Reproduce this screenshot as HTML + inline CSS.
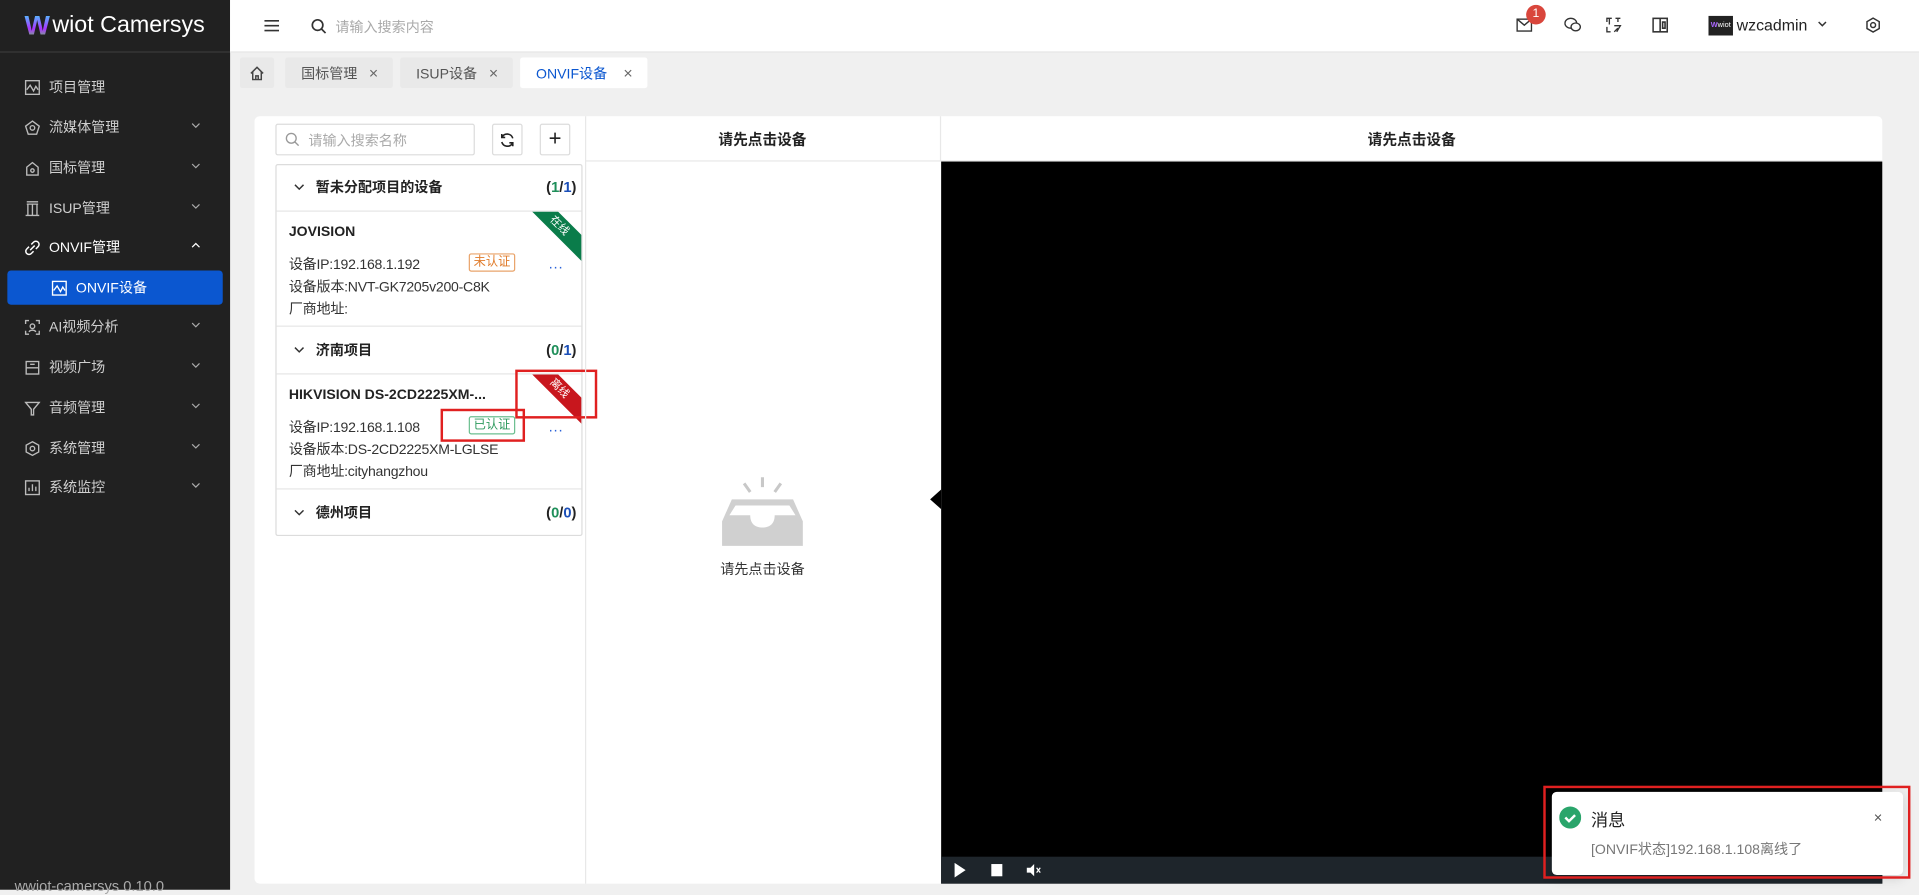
<!DOCTYPE html>
<html><head><meta charset="utf-8"><style>
*{box-sizing:border-box;margin:0;padding:0}
html,body{width:1919px;height:889px;overflow:hidden;background:#f0f0f0}
body{font-family:"Liberation Sans","Noto Sans CJK SC",sans-serif;font-size:12px;color:#333}
#w{position:absolute;left:0;top:0;width:1568px;height:727px;transform:scale(1.22385);transform-origin:0 0;background:#f0f0f0}
.abs{position:absolute}
#side{left:0;top:0;width:188px;height:727px;background:#212121;color:#cfcfcf}
#logo{height:43px;border-bottom:1px solid #3a3a3a;display:flex;align-items:center;padding-left:20px;font-size:19px;color:#fff}
#logo b{font-size:22px;background:linear-gradient(180deg,#3ef 0%,#a3f 60%,#5f3 100%);-webkit-background-clip:text;color:transparent;margin-right:2px}
.mi{position:absolute;left:0;width:188px;height:30px;display:flex;align-items:center;padding-left:20px;font-size:11.5px}
.mi svg{width:13px;height:13px;margin-right:7px}
.mi .ch{position:absolute;right:16px;top:9px;width:10px;height:10px}
.act{left:6px;width:176px;background:#0b57d0;border-radius:3px;color:#fff;padding-left:36px}
#hdr{left:188px;top:0;width:1380px;height:43px;background:#fff;border-bottom:1px solid #e4e4e4}
.tab{position:absolute;top:47px;height:25px;background:#e9e9e9;display:flex;align-items:center;padding-left:13px;color:#555;font-size:11.5px;border-radius:2px}
.tab i{font-style:normal;position:absolute;right:12px;font-size:13px;color:#666}
#card{left:208px;top:95px;width:1330px;height:627px;background:#fff;border-radius:4px}
.box{position:absolute;border:1px solid #dcdcdc;border-radius:2px;background:#fff}
.grp{position:absolute;left:226px;width:249px;height:38px;border-top:1px solid #e6e6e6;display:flex;align-items:center;font-weight:bold;font-size:11.5px;color:#222}
.grp .c{position:absolute;right:4px;font-size:12px}
.dev{position:absolute;left:226px;width:249px;height:94px;border-top:1px solid #e6e6e6;overflow:hidden}
.dev .t{position:absolute;left:10px;top:11px;font-weight:bold;font-size:11.5px;color:#222}
.dev .r{position:absolute;left:10px;font-size:11.5px;color:#333;letter-spacing:-.2px}
.tag{position:absolute;left:157px;top:34px;width:38px;height:15px;border:1px solid;border-radius:2px;font-size:10px;text-align:center;line-height:13px}
.dots{position:absolute;left:222px;top:38px;color:#2a62d8;font-size:12px;letter-spacing:0px}
.rib{position:absolute;right:-27px;top:4px;width:90px;height:15px;transform:rotate(45deg);color:#fff;font-size:9px;text-align:center;line-height:15px}
.red{position:absolute;border:2px solid #e02020}
</style></head><body><div id="w">
<div id="side" class="abs">
 <div id="logo"><b>W</b>wiot Camersys</div>
 <div class="mi" style="top:56px"><svg viewBox="0 0 14 14" fill="none" stroke="#bbb" stroke-width="1.2"><rect x="1" y="1" width="12" height="12"/><path d="M2 9l3-4 3 5 2-4 2 3"/></svg>项目管理</div>
 <div class="mi" style="top:89px"><svg viewBox="0 0 14 14" fill="none" stroke="#bbb" stroke-width="1.2"><path d="M7 1l6 4.5-2.3 7H3.3L1 5.5z"/><circle cx="7" cy="7" r="2"/></svg>流媒体管理<svg class="ch" viewBox="0 0 10 10"><path d="M2 3l3 3 3-3" fill="none" stroke="#aaa"/></svg></div>
 <div class="mi" style="top:122px"><svg viewBox="0 0 14 14" fill="none" stroke="#bbb" stroke-width="1.2"><path d="M2 13V6l5-4 5 4v7z"/><circle cx="7" cy="9" r="1.5"/></svg>国标管理<svg class="ch" viewBox="0 0 10 10"><path d="M2 3l3 3 3-3" fill="none" stroke="#aaa"/></svg></div>
 <div class="mi" style="top:155px"><svg viewBox="0 0 14 14" fill="none" stroke="#bbb" stroke-width="1.2"><path d="M1 13h12M2 3h10M3 3v10M7 3v10M11 3v10M2 1h10"/></svg>ISUP管理<svg class="ch" viewBox="0 0 10 10"><path d="M2 3l3 3 3-3" fill="none" stroke="#aaa"/></svg></div>
 <div class="mi" style="top:187px;color:#fff"><svg viewBox="0 0 14 14" fill="none" stroke="#fff" stroke-width="1.3"><path d="M5 9l4-4M4 6L2 8a2.5 2.5 0 004 4l2-2M10 8l2-2a2.5 2.5 0 00-4-4L6 4"/></svg>ONVIF管理<svg class="ch" viewBox="0 0 10 10"><path d="M2 6l3-3 3 3" fill="none" stroke="#fff"/></svg></div>
 <div class="mi act" style="top:221px;height:28px"><svg viewBox="0 0 14 14" fill="none" stroke="#fff" stroke-width="1.2"><rect x="1" y="1" width="12" height="12"/><path d="M2 9l3-4 3 5 2-4 2 3"/></svg>ONVIF设备</div>
 <div class="mi" style="top:252px"><svg viewBox="0 0 14 14" fill="none" stroke="#bbb" stroke-width="1.2"><path d="M1 4V1h3M10 1h3v3M13 10v3h-3M4 13H1v-3"/><circle cx="7" cy="6" r="2"/><path d="M4 11c1-2 5-2 6 0"/></svg>AI视频分析<svg class="ch" viewBox="0 0 10 10"><path d="M2 3l3 3 3-3" fill="none" stroke="#aaa"/></svg></div>
 <div class="mi" style="top:285px"><svg viewBox="0 0 14 14" fill="none" stroke="#bbb" stroke-width="1.2"><rect x="1.5" y="1.5" width="11" height="11"/><path d="M1.5 7h11M5 4h4"/></svg>视频广场<svg class="ch" viewBox="0 0 10 10"><path d="M2 3l3 3 3-3" fill="none" stroke="#aaa"/></svg></div>
 <div class="mi" style="top:318px"><svg viewBox="0 0 14 14" fill="none" stroke="#bbb" stroke-width="1.2"><path d="M1 2h12L8 8v5H6V8z"/></svg>音频管理<svg class="ch" viewBox="0 0 10 10"><path d="M2 3l3 3 3-3" fill="none" stroke="#aaa"/></svg></div>
 <div class="mi" style="top:351px"><svg viewBox="0 0 14 14" fill="none" stroke="#bbb" stroke-width="1.2"><path d="M7 1l5.5 3v6L7 13l-5.5-3V4z"/><circle cx="7" cy="7" r="2"/></svg>系统管理<svg class="ch" viewBox="0 0 10 10"><path d="M2 3l3 3 3-3" fill="none" stroke="#aaa"/></svg></div>
 <div class="mi" style="top:383px"><svg viewBox="0 0 14 14" fill="none" stroke="#bbb" stroke-width="1.2"><rect x="1" y="1" width="12" height="12"/><path d="M4 10V7M7 10V4M10 10V6"/></svg>系统监控<svg class="ch" viewBox="0 0 10 10"><path d="M2 3l3 3 3-3" fill="none" stroke="#aaa"/></svg></div>
 <div class="abs" style="left:12px;top:717px;color:#aaa;font-size:12px">wwiot-camersys 0.10.0</div>
</div>
<div id="hdr" class="abs">
 <svg class="abs" style="left:28px;top:15px" width="12" height="12" viewBox="0 0 12 12"><path d="M0 2h12M0 6h12M0 10h12" stroke="#333" stroke-width="1.3"/></svg>
 <svg class="abs" style="left:66px;top:15px" width="13" height="13" viewBox="0 0 13 13" fill="none" stroke="#333" stroke-width="1.4"><circle cx="5.5" cy="5.5" r="4.3"/><path d="M8.7 8.7l3.3 3.3"/></svg>
 <div class="abs" style="left:86px;top:14px;color:#aaa;font-size:11.5px">请输入搜索内容</div>
 <svg class="abs" style="left:1051px;top:15px" width="13" height="11" viewBox="0 0 13 11" fill="none" stroke="#333" stroke-width="1.2"><rect x=".6" y=".6" width="11.8" height="9.8"/><path d="M.6 .6l5.9 5 5.9-5"/></svg>
 <div class="abs" style="left:1059px;top:4px;width:16px;height:16px;border-radius:8px;background:#d9463c;color:#fff;font-size:10px;text-align:center;line-height:16px">1</div>
 <svg class="abs" style="left:1090px;top:14px" width="14" height="13" viewBox="0 0 14 13" fill="none" stroke="#333" stroke-width="1.1"><ellipse cx="5.5" cy="5" rx="4.8" ry="4"/><ellipse cx="9.5" cy="8" rx="3.8" ry="3.2" fill="#fff"/></svg>
 <svg class="abs" style="left:1124px;top:14px" width="13" height="13" viewBox="0 0 13 13" fill="none" stroke="#333" stroke-width="1.1"><path d="M1 4V1h4M3 1v5M1 8v4h3M8 1h4M10 1v3M7 7h5l-3 5M7 12l3-3"/></svg>
 <svg class="abs" style="left:1162px;top:14px" width="13" height="13" viewBox="0 0 13 13" fill="none" stroke="#333" stroke-width="1.3"><rect x=".7" y="1" width="11.6" height="11"/><path d="M6.5 1v11M8.5 4h2v5h-2z"/></svg>
 <div class="abs" style="left:1208px;top:13px;width:20px;height:16px;background:#222;color:#fff;font-size:6px;line-height:16px;text-align:center"><b style="color:#a6f">W</b>wiot</div>
 <div class="abs" style="left:1231px;top:13px;font-size:13px;color:#222">wzcadmin</div>
 <svg class="abs" style="left:1296px;top:16px" width="10" height="8" viewBox="0 0 10 8"><path d="M2 2l3 3 3-3" fill="none" stroke="#333" stroke-width="1.2"/></svg>
 <svg class="abs" style="left:1336px;top:14px" width="13" height="13" viewBox="0 0 13 13" fill="none" stroke="#333" stroke-width="1.2"><path d="M6.5 .8l5 2.9v5.6l-5 2.9-5-2.9V3.7z"/><circle cx="6.5" cy="6.5" r="2"/></svg>
</div>
<div class="tab" style="left:196px;width:28px;padding-left:8px"><svg width="12" height="12" viewBox="0 0 12 12" fill="none" stroke="#444" stroke-width="1.2"><path d="M1 6l5-5 5 5M2.5 4.5V11h7V4.5M5 11V8h2v3"/></svg></div>
<div class="tab" style="left:233px;width:88px">国标管理<i>×</i></div>
<div class="tab" style="left:327px;width:92px">ISUP设备<i>×</i></div>
<div class="tab" style="left:425px;width:104px;background:#fff;color:#0b57d0">ONVIF设备<i>×</i></div>
<div id="card" class="abs"></div>
<div class="box" style="left:225px;top:101px;width:163px;height:26px"><svg class="abs" style="left:7px;top:6px" width="12" height="12" viewBox="0 0 12 12" fill="none" stroke="#999" stroke-width="1.1"><circle cx="5" cy="5" r="4"/><path d="M8 8l3 3"/></svg><span class="abs" style="left:26px;top:5px;color:#aaa;font-size:11.5px">请输入搜索名称</span></div>
<div class="box" style="left:402px;top:101px;width:25px;height:26px"><svg class="abs" style="left:5px;top:6px" width="13" height="13" viewBox="0 0 13 13" fill="none" stroke="#222" stroke-width="1.3"><path d="M11 5A4.8 4.8 0 002.2 4M2 8a4.8 4.8 0 008.8 1M2 1.5v2.8h2.8M11 11.5V8.7H8.2"/></svg></div>
<div class="box" style="left:441px;top:101px;width:25px;height:26px;text-align:center;font-size:18px;line-height:23px;color:#222">+</div>
<div class="box" style="left:225px;top:134px;width:251px;height:304px"></div>
<div class="grp" style="top:134px;border-top:none"><svg style="margin:0 9px 0 14px" width="9" height="6" viewBox="0 0 9 6"><path d="M1 1l3.5 3.5L8 1" fill="none" stroke="#333" stroke-width="1.2"/></svg>暂未分配项目的设备<span class="c">(<span style="color:#1f8f5a">1</span>/<span style="color:#1b4fb8">1</span>)</span></div>
<div class="dev" style="top:172px"><div class="rib" style="background:#0a7c4a">在线</div><div class="t">JOVISION</div><div class="r" style="top:35px">设备IP:192.168.1.192</div><div class="r" style="top:53px">设备版本:NVT-GK7205v200-C8K</div><div class="r" style="top:71px">厂商地址:</div><div class="tag" style="color:#e07b2a;border-color:#e9a46b">未认证</div><div class="dots">···</div></div>
<div class="grp" style="top:266px"><svg style="margin:0 9px 0 14px" width="9" height="6" viewBox="0 0 9 6"><path d="M1 1l3.5 3.5L8 1" fill="none" stroke="#333" stroke-width="1.2"/></svg>济南项目<span class="c">(<span style="color:#1f8f5a">0</span>/<span style="color:#1b4fb8">1</span>)</span></div>
<div class="dev" style="top:305px"><div class="rib" style="background:#c8161d">离线</div><div class="t">HIKVISION DS-2CD2225XM-...</div><div class="r" style="top:35px">设备IP:192.168.1.108</div><div class="r" style="top:53px">设备版本:DS-2CD2225XM-LGLSE</div><div class="r" style="top:71px">厂商地址:cityhangzhou</div><div class="tag" style="color:#2e9a5e;border-color:#6cbf90">已认证</div><div class="dots">···</div></div>
<div class="grp" style="top:399px"><svg style="margin:0 9px 0 14px" width="9" height="6" viewBox="0 0 9 6"><path d="M1 1l3.5 3.5L8 1" fill="none" stroke="#333" stroke-width="1.2"/></svg>德州项目<span class="c">(<span style="color:#1f8f5a">0</span>/<span style="color:#1b4fb8">0</span>)</span></div>
<div class="red" style="left:421px;top:302px;width:67px;height:40px"></div>
<div class="red" style="left:360px;top:334px;width:69px;height:27px"></div>
<div class="abs" style="left:478px;top:95px;width:1px;height:627px;background:#e8e8e8"></div>
<div class="abs" style="left:768px;top:95px;width:1px;height:37px;background:#e8e8e8"></div>
<div class="abs" style="left:478px;top:131px;width:1060px;height:1px;background:#e8e8e8"></div>
<div class="abs" style="left:478px;top:105px;width:290px;text-align:center;font-weight:bold;font-size:12px;color:#222">请先点击设备</div>
<div class="abs" style="left:769px;top:105px;width:769px;text-align:center;font-weight:bold;font-size:12px;color:#222">请先点击设备</div>
<svg class="abs" style="left:588px;top:388px" width="70" height="60" viewBox="0 0 70 60"><path d="M35 2v8M20 7l5 7M50 7l-5 7" stroke="#c8c8c8" stroke-width="2.5"/><path d="M10 20h50l8 18v20H2V38z" fill="#d0d0d0"/><path d="M8 33h17c0 7 4 10 10 10s10-3 10-10h17L57 25H13z" fill="#fff"/></svg>
<div class="abs" style="left:478px;top:457px;width:290px;text-align:center;font-size:11.5px;color:#333">请先点击设备</div>
<div class="abs" style="left:769px;top:132px;width:769px;height:590px;background:#000"></div>
<div class="abs" style="left:760px;top:400px;width:0;height:0;border-top:8px solid transparent;border-bottom:8px solid transparent;border-right:9px solid #000"></div>
<div class="abs" style="left:769px;top:700px;width:769px;height:22px;background:#1e252b"></div>
<svg class="abs" style="left:779px;top:705px" width="80" height="12" viewBox="0 0 80 12" fill="#fff"><path d="M1 0l9 6-9 6z"/><rect x="31" y="1" width="9" height="10"/><path d="M60 4h3l3-3v10l-3-3h-3z"/><path d="M68 4l3 4M71 4l-3 4" stroke="#fff" stroke-width="1"/></svg>
<div class="abs" style="left:1268px;top:647px;width:287px;height:68px;background:#fff;border-radius:4px;box-shadow:0 2px 10px rgba(0,0,0,.15)"></div>
<div class="red" style="left:1261px;top:642px;width:300px;height:76px"></div>
<svg class="abs" style="left:1274px;top:659px" width="18" height="18" viewBox="0 0 18 18"><circle cx="9" cy="9" r="9" fill="#2aa56b"/><path d="M5 9l3 3 5-5" fill="none" stroke="#fff" stroke-width="2"/></svg>
<div class="abs" style="left:1300px;top:660px;font-size:14px;color:#222">消息</div>
<div class="abs" style="left:1531px;top:661px;font-size:12px;color:#555">×</div>
<div class="abs" style="left:1300px;top:686px;font-size:11.5px;color:#777">[ONVIF状态]192.168.1.108离线了</div>
</div></body></html>
